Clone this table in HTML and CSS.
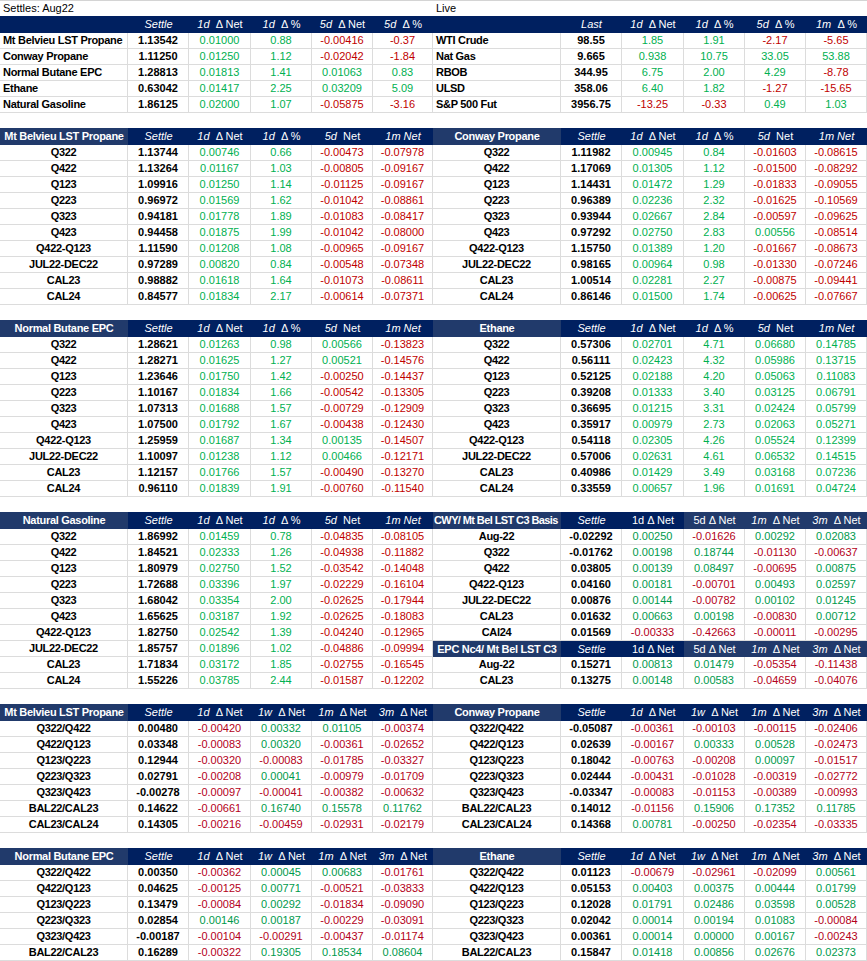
FILE: index.html
```html
<!DOCTYPE html>
<html lang="en">
<head>
<meta charset="utf-8">
<title>NGL Settles</title>
<link rel="stylesheet" href="styles.css">
</head>
<body>
<div class="sheet">

  <!-- Band 1 -->
  <section class="sec top">
    <div class="cap">Settles: Aug22</div>
    <div class="hd"><span class="l"></span><span><i>Settle</i></span><span><i>1d</i>&nbsp; Δ Net</span><span><i>1d</i>&nbsp; Δ %</span><span><i>5d</i>&nbsp; Δ Net</span><span><i>5d</i>&nbsp; Δ %</span></div>
    <div class="r"><span class="l">Mt Belvieu LST Propane</span><span class="s">1.13542</span><span class="g">0.01000</span><span class="g">0.88</span><span class="n">-0.00416</span><span class="n">-0.37</span></div>
    <div class="r"><span class="l">Conway Propane</span><span class="s">1.11250</span><span class="g">0.01250</span><span class="g">1.12</span><span class="n">-0.02042</span><span class="n">-1.84</span></div>
    <div class="r"><span class="l">Normal Butane EPC</span><span class="s">1.28813</span><span class="g">0.01813</span><span class="g">1.41</span><span class="g">0.01063</span><span class="g">0.83</span></div>
    <div class="r"><span class="l">Ethane</span><span class="s">0.63042</span><span class="g">0.01417</span><span class="g">2.25</span><span class="g">0.03209</span><span class="g">5.09</span></div>
    <div class="r"><span class="l">Natural Gasoline</span><span class="s">1.86125</span><span class="g">0.02000</span><span class="g">1.07</span><span class="n">-0.05875</span><span class="n">-3.16</span></div>
  </section>
  <section class="sec top">
    <div class="cap">Live</div>
    <div class="hd"><span class="l"></span><span><i>Last</i></span><span><i>1d</i>&nbsp; Δ Net</span><span><i>1d</i>&nbsp; Δ %</span><span><i>5d</i>&nbsp; Δ %</span><span><i>1m</i>&nbsp; Δ %</span></div>
    <div class="r"><span class="l">WTI Crude</span><span class="s">98.55</span><span class="g">1.85</span><span class="g">1.91</span><span class="n">-2.17</span><span class="n">-5.65</span></div>
    <div class="r"><span class="l">Nat Gas</span><span class="s">9.665</span><span class="g">0.938</span><span class="g">10.75</span><span class="g">33.05</span><span class="g">53.88</span></div>
    <div class="r"><span class="l">RBOB</span><span class="s">344.95</span><span class="g">6.75</span><span class="g">2.00</span><span class="g">4.29</span><span class="n">-8.78</span></div>
    <div class="r"><span class="l">ULSD</span><span class="s">358.06</span><span class="g">6.40</span><span class="g">1.82</span><span class="n">-1.27</span><span class="n">-15.65</span></div>
    <div class="r"><span class="l">S&amp;P 500 Fut</span><span class="s">3956.75</span><span class="n">-13.25</span><span class="n">-0.33</span><span class="g">0.49</span><span class="g">1.03</span></div>
  </section>

  <!-- Band 2 -->
  <section class="sec">
    <div class="hd"><span class="l">Mt Belvieu LST Propane</span><span><i>Settle</i></span><span><i>1d</i>&nbsp; Δ Net</span><span><i>1d</i>&nbsp; Δ %</span><span><i>5d</i>&nbsp; Net</span><span><i>1m Net</i></span></div>
    <div class="r"><span class="l">Q322</span><span class="s">1.13744</span><span class="g">0.00746</span><span class="g">0.66</span><span class="n">-0.00473</span><span class="n">-0.07978</span></div>
    <div class="r"><span class="l">Q422</span><span class="s">1.13264</span><span class="g">0.01167</span><span class="g">1.03</span><span class="n">-0.00805</span><span class="n">-0.09167</span></div>
    <div class="r"><span class="l">Q123</span><span class="s">1.09916</span><span class="g">0.01250</span><span class="g">1.14</span><span class="n">-0.01125</span><span class="n">-0.09167</span></div>
    <div class="r"><span class="l">Q223</span><span class="s">0.96972</span><span class="g">0.01569</span><span class="g">1.62</span><span class="n">-0.01042</span><span class="n">-0.08861</span></div>
    <div class="r"><span class="l">Q323</span><span class="s">0.94181</span><span class="g">0.01778</span><span class="g">1.89</span><span class="n">-0.01083</span><span class="n">-0.08417</span></div>
    <div class="r"><span class="l">Q423</span><span class="s">0.94458</span><span class="g">0.01875</span><span class="g">1.99</span><span class="n">-0.01042</span><span class="n">-0.08000</span></div>
    <div class="r"><span class="l">Q422-Q123</span><span class="s">1.11590</span><span class="g">0.01208</span><span class="g">1.08</span><span class="n">-0.00965</span><span class="n">-0.09167</span></div>
    <div class="r"><span class="l">JUL22-DEC22</span><span class="s">0.97289</span><span class="g">0.00820</span><span class="g">0.84</span><span class="n">-0.00548</span><span class="n">-0.07348</span></div>
    <div class="r"><span class="l">CAL23</span><span class="s">0.98882</span><span class="g">0.01618</span><span class="g">1.64</span><span class="n">-0.01073</span><span class="n">-0.08611</span></div>
    <div class="r"><span class="l">CAL24</span><span class="s">0.84577</span><span class="g">0.01834</span><span class="g">2.17</span><span class="n">-0.00614</span><span class="n">-0.07371</span></div>
  </section>
  <section class="sec">
    <div class="hd"><span class="l">Conway Propane</span><span><i>Settle</i></span><span><i>1d</i>&nbsp; Δ Net</span><span><i>1d</i>&nbsp; Δ %</span><span><i>5d</i>&nbsp; Net</span><span><i>1m Net</i></span></div>
    <div class="r"><span class="l">Q322</span><span class="s">1.11982</span><span class="g">0.00945</span><span class="g">0.84</span><span class="n">-0.01603</span><span class="n">-0.08615</span></div>
    <div class="r"><span class="l">Q422</span><span class="s">1.17069</span><span class="g">0.01305</span><span class="g">1.12</span><span class="n">-0.01500</span><span class="n">-0.08292</span></div>
    <div class="r"><span class="l">Q123</span><span class="s">1.14431</span><span class="g">0.01472</span><span class="g">1.29</span><span class="n">-0.01833</span><span class="n">-0.09055</span></div>
    <div class="r"><span class="l">Q223</span><span class="s">0.96389</span><span class="g">0.02236</span><span class="g">2.32</span><span class="n">-0.01625</span><span class="n">-0.10569</span></div>
    <div class="r"><span class="l">Q323</span><span class="s">0.93944</span><span class="g">0.02667</span><span class="g">2.84</span><span class="n">-0.00597</span><span class="n">-0.09625</span></div>
    <div class="r"><span class="l">Q423</span><span class="s">0.97292</span><span class="g">0.02750</span><span class="g">2.83</span><span class="g">0.00556</span><span class="n">-0.08514</span></div>
    <div class="r"><span class="l">Q422-Q123</span><span class="s">1.15750</span><span class="g">0.01389</span><span class="g">1.20</span><span class="n">-0.01667</span><span class="n">-0.08673</span></div>
    <div class="r"><span class="l">JUL22-DEC22</span><span class="s">0.98165</span><span class="g">0.00964</span><span class="g">0.98</span><span class="n">-0.01330</span><span class="n">-0.07246</span></div>
    <div class="r"><span class="l">CAL23</span><span class="s">1.00514</span><span class="g">0.02281</span><span class="g">2.27</span><span class="n">-0.00875</span><span class="n">-0.09441</span></div>
    <div class="r"><span class="l">CAL24</span><span class="s">0.86146</span><span class="g">0.01500</span><span class="g">1.74</span><span class="n">-0.00625</span><span class="n">-0.07667</span></div>
  </section>

  <!-- Band 3 -->
  <section class="sec">
    <div class="hd"><span class="l">Normal Butane EPC</span><span><i>Settle</i></span><span><i>1d</i>&nbsp; Δ Net</span><span><i>1d</i>&nbsp; Δ %</span><span><i>5d</i>&nbsp; Net</span><span><i>1m Net</i></span></div>
    <div class="r"><span class="l">Q322</span><span class="s">1.28621</span><span class="g">0.01263</span><span class="g">0.98</span><span class="g">0.00566</span><span class="n">-0.13823</span></div>
    <div class="r"><span class="l">Q422</span><span class="s">1.28271</span><span class="g">0.01625</span><span class="g">1.27</span><span class="g">0.00521</span><span class="n">-0.14576</span></div>
    <div class="r"><span class="l">Q123</span><span class="s">1.23646</span><span class="g">0.01750</span><span class="g">1.42</span><span class="n">-0.00250</span><span class="n">-0.14437</span></div>
    <div class="r"><span class="l">Q223</span><span class="s">1.10167</span><span class="g">0.01834</span><span class="g">1.66</span><span class="n">-0.00542</span><span class="n">-0.13305</span></div>
    <div class="r"><span class="l">Q323</span><span class="s">1.07313</span><span class="g">0.01688</span><span class="g">1.57</span><span class="n">-0.00729</span><span class="n">-0.12909</span></div>
    <div class="r"><span class="l">Q423</span><span class="s">1.07500</span><span class="g">0.01792</span><span class="g">1.67</span><span class="n">-0.00438</span><span class="n">-0.12430</span></div>
    <div class="r"><span class="l">Q422-Q123</span><span class="s">1.25959</span><span class="g">0.01687</span><span class="g">1.34</span><span class="g">0.00135</span><span class="n">-0.14507</span></div>
    <div class="r"><span class="l">JUL22-DEC22</span><span class="s">1.10097</span><span class="g">0.01238</span><span class="g">1.12</span><span class="g">0.00466</span><span class="n">-0.12171</span></div>
    <div class="r"><span class="l">CAL23</span><span class="s">1.12157</span><span class="g">0.01766</span><span class="g">1.57</span><span class="n">-0.00490</span><span class="n">-0.13270</span></div>
    <div class="r"><span class="l">CAL24</span><span class="s">0.96110</span><span class="g">0.01839</span><span class="g">1.91</span><span class="n">-0.00760</span><span class="n">-0.11540</span></div>
  </section>
  <section class="sec">
    <div class="hd"><span class="l">Ethane</span><span><i>Settle</i></span><span><i>1d</i>&nbsp; Δ Net</span><span><i>1d</i>&nbsp; Δ %</span><span><i>5d</i>&nbsp; Net</span><span><i>1m Net</i></span></div>
    <div class="r"><span class="l">Q322</span><span class="s">0.57306</span><span class="g">0.02701</span><span class="g">4.71</span><span class="g">0.06680</span><span class="g">0.14785</span></div>
    <div class="r"><span class="l">Q422</span><span class="s">0.56111</span><span class="g">0.02423</span><span class="g">4.32</span><span class="g">0.05986</span><span class="g">0.13715</span></div>
    <div class="r"><span class="l">Q123</span><span class="s">0.52125</span><span class="g">0.02188</span><span class="g">4.20</span><span class="g">0.05063</span><span class="g">0.11083</span></div>
    <div class="r"><span class="l">Q223</span><span class="s">0.39208</span><span class="g">0.01333</span><span class="g">3.40</span><span class="g">0.03125</span><span class="g">0.06791</span></div>
    <div class="r"><span class="l">Q323</span><span class="s">0.36695</span><span class="g">0.01215</span><span class="g">3.31</span><span class="g">0.02424</span><span class="g">0.05799</span></div>
    <div class="r"><span class="l">Q423</span><span class="s">0.35917</span><span class="g">0.00979</span><span class="g">2.73</span><span class="g">0.02063</span><span class="g">0.05271</span></div>
    <div class="r"><span class="l">Q422-Q123</span><span class="s">0.54118</span><span class="g">0.02305</span><span class="g">4.26</span><span class="g">0.05524</span><span class="g">0.12399</span></div>
    <div class="r"><span class="l">JUL22-DEC22</span><span class="s">0.57006</span><span class="g">0.02631</span><span class="g">4.61</span><span class="g">0.06532</span><span class="g">0.14515</span></div>
    <div class="r"><span class="l">CAL23</span><span class="s">0.40986</span><span class="g">0.01429</span><span class="g">3.49</span><span class="g">0.03168</span><span class="g">0.07236</span></div>
    <div class="r"><span class="l">CAL24</span><span class="s">0.33559</span><span class="g">0.00657</span><span class="g">1.96</span><span class="g">0.01691</span><span class="g">0.04724</span></div>
  </section>

  <!-- Band 4 -->
  <section class="sec">
    <div class="hd"><span class="l">Natural Gasoline</span><span><i>Settle</i></span><span><i>1d</i>&nbsp; Δ Net</span><span><i>1d</i>&nbsp; Δ %</span><span><i>5d</i>&nbsp; Net</span><span><i>1m Net</i></span></div>
    <div class="r"><span class="l">Q322</span><span class="s">1.86992</span><span class="g">0.01459</span><span class="g">0.78</span><span class="n">-0.04835</span><span class="n">-0.08105</span></div>
    <div class="r"><span class="l">Q422</span><span class="s">1.84521</span><span class="g">0.02333</span><span class="g">1.26</span><span class="n">-0.04938</span><span class="n">-0.11882</span></div>
    <div class="r"><span class="l">Q123</span><span class="s">1.80979</span><span class="g">0.02750</span><span class="g">1.52</span><span class="n">-0.03542</span><span class="n">-0.14048</span></div>
    <div class="r"><span class="l">Q223</span><span class="s">1.72688</span><span class="g">0.03396</span><span class="g">1.97</span><span class="n">-0.02229</span><span class="n">-0.16104</span></div>
    <div class="r"><span class="l">Q323</span><span class="s">1.68042</span><span class="g">0.03354</span><span class="g">2.00</span><span class="n">-0.02625</span><span class="n">-0.17944</span></div>
    <div class="r"><span class="l">Q423</span><span class="s">1.65625</span><span class="g">0.03187</span><span class="g">1.92</span><span class="n">-0.02625</span><span class="n">-0.18083</span></div>
    <div class="r"><span class="l">Q422-Q123</span><span class="s">1.82750</span><span class="g">0.02542</span><span class="g">1.39</span><span class="n">-0.04240</span><span class="n">-0.12965</span></div>
    <div class="r"><span class="l">JUL22-DEC22</span><span class="s">1.85757</span><span class="g">0.01896</span><span class="g">1.02</span><span class="n">-0.04886</span><span class="n">-0.09994</span></div>
    <div class="r"><span class="l">CAL23</span><span class="s">1.71834</span><span class="g">0.03172</span><span class="g">1.85</span><span class="n">-0.02755</span><span class="n">-0.16545</span></div>
    <div class="r"><span class="l">CAL24</span><span class="s">1.55226</span><span class="g">0.03785</span><span class="g">2.44</span><span class="n">-0.01587</span><span class="n">-0.12202</span></div>
  </section>
  <div class="stack dk">
    <section class="sec">
      <div class="hd"><span class="l left">CWY/ Mt Bel LST C3 Basis</span><span><i>Settle</i></span><span>1d Δ Net</span><span class="lt">5d Δ Net</span><span class="lt"><i>1m</i>&nbsp; Δ Net</span><span class="lt"><i>3m</i>&nbsp; Δ Net</span></div>
      <div class="r"><span class="l">Aug-22</span><span class="s">-0.02292</span><span class="g">0.00250</span><span class="n">-0.01626</span><span class="g">0.00292</span><span class="g">0.02083</span></div>
      <div class="r"><span class="l">Q322</span><span class="s">-0.01762</span><span class="g">0.00198</span><span class="g">0.18744</span><span class="n">-0.01130</span><span class="n">-0.00637</span></div>
      <div class="r"><span class="l">Q422</span><span class="s">0.03805</span><span class="g">0.00139</span><span class="g">0.08497</span><span class="n">-0.00695</span><span class="g">0.00875</span></div>
      <div class="r"><span class="l">Q422-Q123</span><span class="s">0.04160</span><span class="g">0.00181</span><span class="n">-0.00701</span><span class="g">0.00493</span><span class="g">0.02597</span></div>
      <div class="r"><span class="l">JUL22-DEC22</span><span class="s">0.00876</span><span class="g">0.00144</span><span class="n">-0.00782</span><span class="g">0.00102</span><span class="g">0.01245</span></div>
      <div class="r"><span class="l">CAL23</span><span class="s">0.01632</span><span class="g">0.00663</span><span class="g">0.00198</span><span class="n">-0.00830</span><span class="g">0.00712</span></div>
      <div class="r"><span class="l">CAl24</span><span class="s">0.01569</span><span class="n">-0.00333</span><span class="n">-0.42663</span><span class="n">-0.00011</span><span class="n">-0.00295</span></div>
    </section>
    <section class="sec">
      <div class="hd short"><span class="l">EPC Nc4/ Mt Bel LST C3</span><span><i>Settle</i></span><span>1d Δ Net</span><span class="lt">5d Δ Net</span><span class="lt"><i>1m</i>&nbsp; Δ Net</span><span class="lt"><i>3m</i>&nbsp; Δ Net</span></div>
      <div class="r"><span class="l">Aug-22</span><span class="s">0.15271</span><span class="g">0.00813</span><span class="g">0.01479</span><span class="n">-0.05354</span><span class="n">-0.11438</span></div>
      <div class="r"><span class="l">CAL23</span><span class="s">0.13275</span><span class="g">0.00148</span><span class="g">0.00583</span><span class="n">-0.04659</span><span class="n">-0.04076</span></div>
    </section>
  </div>

  <!-- Band 5 -->
  <section class="sec dk">
    <div class="hd"><span class="l">Mt Belvieu LST Propane</span><span><i>Settle</i></span><span><i>1d</i>&nbsp; Δ Net</span><span><i>1w</i>&nbsp; Δ Net</span><span><i>1m</i>&nbsp; Δ Net</span><span><i>3m</i>&nbsp; Δ Net</span></div>
    <div class="r"><span class="l">Q322/Q422</span><span class="s">0.00480</span><span class="n">-0.00420</span><span class="g">0.00332</span><span class="g">0.01105</span><span class="n">-0.00374</span></div>
    <div class="r"><span class="l">Q422/Q123</span><span class="s">0.03348</span><span class="n">-0.00083</span><span class="g">0.00320</span><span class="n">-0.00361</span><span class="n">-0.02652</span></div>
    <div class="r"><span class="l">Q123/Q223</span><span class="s">0.12944</span><span class="n">-0.00320</span><span class="n">-0.00083</span><span class="n">-0.01785</span><span class="n">-0.03327</span></div>
    <div class="r"><span class="l">Q223/Q323</span><span class="s">0.02791</span><span class="n">-0.00208</span><span class="g">0.00041</span><span class="n">-0.00979</span><span class="n">-0.01709</span></div>
    <div class="r"><span class="l">Q323/Q423</span><span class="s">-0.00278</span><span class="n">-0.00097</span><span class="n">-0.00041</span><span class="n">-0.00382</span><span class="n">-0.00632</span></div>
    <div class="r"><span class="l">BAL22/CAL23</span><span class="s">0.14622</span><span class="n">-0.00661</span><span class="g">0.16740</span><span class="g">0.15578</span><span class="g">0.11762</span></div>
    <div class="r"><span class="l">CAL23/CAL24</span><span class="s">0.14305</span><span class="n">-0.00216</span><span class="n">-0.00459</span><span class="n">-0.02931</span><span class="n">-0.02179</span></div>
  </section>
  <section class="sec dk">
    <div class="hd"><span class="l">Conway Propane</span><span><i>Settle</i></span><span><i>1d</i>&nbsp; Δ Net</span><span><i>1w</i>&nbsp; Δ Net</span><span><i>1m</i>&nbsp; Δ Net</span><span><i>3m</i>&nbsp; Δ Net</span></div>
    <div class="r"><span class="l">Q322/Q422</span><span class="s">-0.05087</span><span class="n">-0.00361</span><span class="n">-0.00103</span><span class="n">-0.00115</span><span class="n">-0.02406</span></div>
    <div class="r"><span class="l">Q422/Q123</span><span class="s">0.02639</span><span class="n">-0.00167</span><span class="g">0.00333</span><span class="g">0.00528</span><span class="n">-0.02473</span></div>
    <div class="r"><span class="l">Q123/Q223</span><span class="s">0.18042</span><span class="n">-0.00763</span><span class="n">-0.00208</span><span class="g">0.00097</span><span class="n">-0.01517</span></div>
    <div class="r"><span class="l">Q223/Q323</span><span class="s">0.02444</span><span class="n">-0.00431</span><span class="n">-0.01028</span><span class="n">-0.00319</span><span class="n">-0.02772</span></div>
    <div class="r"><span class="l">Q323/Q423</span><span class="s">-0.03347</span><span class="n">-0.00083</span><span class="n">-0.01153</span><span class="n">-0.00389</span><span class="n">-0.00993</span></div>
    <div class="r"><span class="l">BAL22/CAL23</span><span class="s">0.14012</span><span class="n">-0.01156</span><span class="g">0.15906</span><span class="g">0.17352</span><span class="g">0.11785</span></div>
    <div class="r"><span class="l">CAL23/CAL24</span><span class="s">0.14368</span><span class="g">0.00781</span><span class="n">-0.00250</span><span class="n">-0.02354</span><span class="n">-0.03335</span></div>
  </section>

  <!-- Band 6 -->
  <section class="sec dk">
    <div class="hd"><span class="l">Normal Butane EPC</span><span><i>Settle</i></span><span><i>1d</i>&nbsp; Δ Net</span><span><i>1w</i>&nbsp; Δ Net</span><span><i>1m</i>&nbsp; Δ Net</span><span><i>3m</i>&nbsp; Δ Net</span></div>
    <div class="r"><span class="l">Q322/Q422</span><span class="s">0.00350</span><span class="n">-0.00362</span><span class="g">0.00045</span><span class="g">0.00683</span><span class="n">-0.01761</span></div>
    <div class="r"><span class="l">Q422/Q123</span><span class="s">0.04625</span><span class="n">-0.00125</span><span class="g">0.00771</span><span class="n">-0.00521</span><span class="n">-0.03833</span></div>
    <div class="r"><span class="l">Q123/Q223</span><span class="s">0.13479</span><span class="n">-0.00084</span><span class="g">0.00292</span><span class="n">-0.01834</span><span class="n">-0.09090</span></div>
    <div class="r"><span class="l">Q223/Q323</span><span class="s">0.02854</span><span class="g">0.00146</span><span class="g">0.00187</span><span class="n">-0.00229</span><span class="n">-0.03091</span></div>
    <div class="r"><span class="l">Q323/Q423</span><span class="s">-0.00187</span><span class="n">-0.00104</span><span class="n">-0.00291</span><span class="n">-0.00437</span><span class="n">-0.01174</span></div>
    <div class="r"><span class="l">BAL22/CAL23</span><span class="s">0.16289</span><span class="n">-0.00322</span><span class="g">0.19305</span><span class="g">0.18534</span><span class="g">0.08604</span></div>
  </section>
  <section class="sec dk">
    <div class="hd"><span class="l">Ethane</span><span><i>Settle</i></span><span><i>1d</i>&nbsp; Δ Net</span><span><i>1w</i>&nbsp; Δ Net</span><span><i>1m</i>&nbsp; Δ Net</span><span><i>3m</i>&nbsp; Δ Net</span></div>
    <div class="r"><span class="l">Q322/Q422</span><span class="s">0.01123</span><span class="n">-0.00679</span><span class="n">-0.02961</span><span class="n">-0.02099</span><span class="g">0.00561</span></div>
    <div class="r"><span class="l">Q422/Q123</span><span class="s">0.05153</span><span class="g">0.00403</span><span class="g">0.00375</span><span class="g">0.00444</span><span class="g">0.01799</span></div>
    <div class="r"><span class="l">Q123/Q223</span><span class="s">0.12028</span><span class="g">0.01791</span><span class="g">0.02486</span><span class="g">0.03598</span><span class="g">0.00528</span></div>
    <div class="r"><span class="l">Q223/Q323</span><span class="s">0.02042</span><span class="g">0.00014</span><span class="g">0.00194</span><span class="g">0.01083</span><span class="n">-0.00084</span></div>
    <div class="r"><span class="l">Q323/Q423</span><span class="s">0.00361</span><span class="g">0.00014</span><span class="g">0.00000</span><span class="g">0.00167</span><span class="n">-0.00243</span></div>
    <div class="r"><span class="l">BAL22/CAL23</span><span class="s">0.15847</span><span class="g">0.01418</span><span class="g">0.00856</span><span class="g">0.02676</span><span class="g">0.02373</span></div>
  </section>

</div>
</body>
</html>
```

FILE: styles.css
```css
* { box-sizing: border-box; }

body {
  margin: 0;
  background: #ffffff;
  color: #000000;
  font-family: "Liberation Sans", Arial, sans-serif;
  font-size: 11px;
}

.sheet {
  display: grid;
  grid-template-columns: 433px 434px;
  row-gap: 15px;
  width: 867px;
  align-items: start;
}

.sec {
  display: flex;
  flex-direction: column;
}

.stack {
  display: flex;
  flex-direction: column;
}

.cap {
  height: 16px;
  line-height: 15px;
  padding-left: 3px;
  border-top: 1px solid #d4d4d4;
}

.hd,
.r {
  display: grid;
  grid-template-columns: 128px 61px 62px 61px 61px 1fr;
}

.hd {
  height: 17px;
  background: #002060;
  color: #ffffff;
}

.hd.short { height: 16px; }

.hd span {
  line-height: 17px;
  text-align: center;
  white-space: nowrap;
  overflow: hidden;
}

.hd.short span { line-height: 16px; }

.hd .l {
  background: #213a6b;
  font-weight: bold;
  letter-spacing: -0.3px;
}

.hd .l.left {
  text-align: left;
  padding-left: 1px;
  letter-spacing: -0.6px;
}

.top .hd .l { background: #002060; }

.hd .lt { background: #213a6b; }

.hd i { font-style: italic; }

.r { height: 16px; }

.r span {
  border-right: 1px solid #dcdcdc;
  border-bottom: 1px solid #dcdcdc;
  line-height: 15px;
  text-align: center;
  white-space: nowrap;
  overflow: hidden;
}

.r .l {
  font-weight: bold;
  letter-spacing: -0.3px;
}

.r .s { font-weight: bold; }

.top .r .l {
  text-align: left;
  padding-left: 3px;
}

.g { color: #00b050; }
.n { color: #c00000; }

.dk .g { color: #009a4c; }
.dk .n { color: #b40020; }
```
